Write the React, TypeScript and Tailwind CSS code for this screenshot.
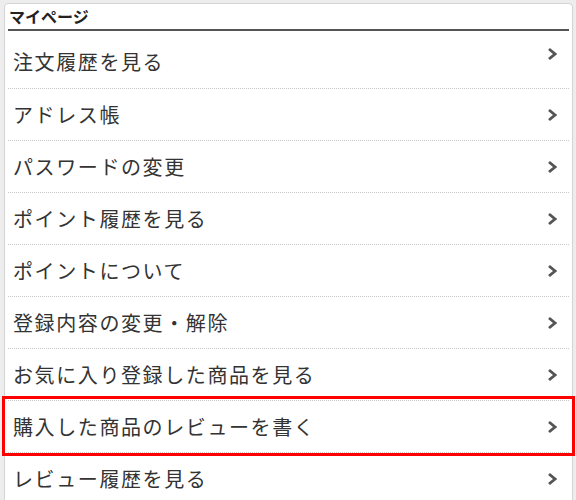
import React from "react";

const items = [
  "注文履歴を見る",
  "アドレス帳",
  "パスワードの変更",
  "ポイント履歴を見る",
  "ポイントについて",
  "登録内容の変更・解除",
  "お気に入り登録した商品を見る",
  "購入した商品のレビューを書く",
  "レビュー履歴を見る",
];

const Chevron = () => (
  <svg width="10" height="14" viewBox="0 0 10 14" className="shrink-0">
    <path d="M2 2 L8 7 L2 12" fill="none" stroke="#555" strokeWidth="2.8" />
  </svg>
);

export default function App() {
  return (
    <div
      className="min-h-screen bg-[#ededed] pt-[3px] pl-[4px]"
      style={{ fontFamily: '"Noto Sans CJK JP", "Noto Sans", sans-serif' }}
    >
      <div className="w-[569px] bg-white border border-[#d4d4d4] rounded-t-[4px] px-[3px] pb-[40px]">
        {/* heading */}
        <div className="h-[27px] border-b-2 border-[#555] pt-[2px] pl-[1px] text-[16px] leading-[21px] font-bold text-[#222]">
          マイページ
        </div>

        <ul>
          {items.map((label, i) => (
            <li
              key={label}
              className={`relative flex justify-between border-b border-dotted border-[#c8c8c8] pl-[5px] pr-[12px] text-[20px] tracking-[1.6px] text-[#333] ${
                i === 0 ? "h-[58px] items-start pt-[17px]" : "h-[52px] items-center"
              }`}
            >
              <span className="leading-[28px]">{label}</span>
              <span className={i === 0 ? "mt-[-1px]" : ""}>
                <Chevron />
              </span>
              {label === "購入した商品のレビューを書く" && (
                <div className="absolute -top-[5px] -bottom-[4px] -left-[6px] -right-[6px] border-[3px] border-[#ff0000] pointer-events-none" />
              )}
            </li>
          ))}
        </ul>
      </div>
    </div>
  );
}
